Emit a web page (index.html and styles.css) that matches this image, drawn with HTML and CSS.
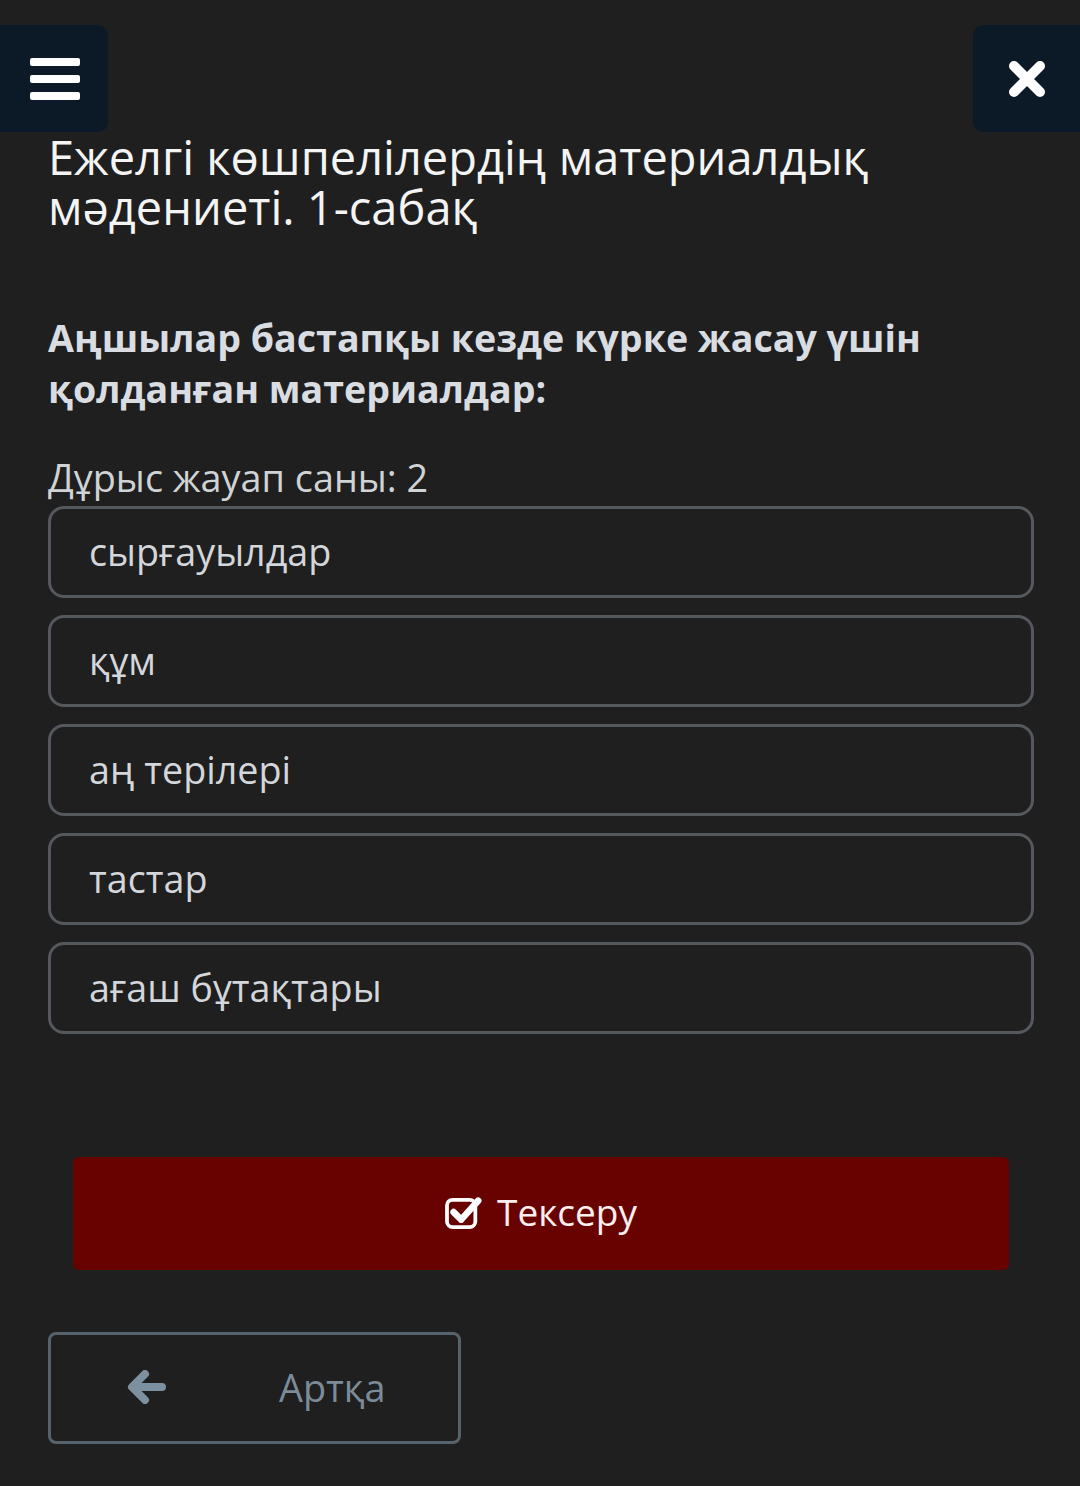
FILE: index.html
```html
<!DOCTYPE html>
<html lang="kk">
<head>
<meta charset="utf-8">
<title>Тест</title>
<link rel="stylesheet" href="styles.css">
</head>
<body>
<div class="page">
  <header class="topbar">
    <div class="tile tile-left">
      <svg class="icon-menu" viewBox="0 0 50 42" width="50" height="42">
        <rect x="0" y="0" width="50" height="8" rx="2" fill="#fff"/>
        <rect x="0" y="17" width="50" height="8" rx="2" fill="#fff"/>
        <rect x="0" y="34" width="50" height="8" rx="2" fill="#fff"/>
      </svg>
    </div>
    <div class="tile tile-right">
      <svg class="icon-close" viewBox="0 0 40 40" width="40" height="40">
        <path d="M7 7 L33 33 M33 7 L7 33" stroke="#fff" stroke-width="10" stroke-linecap="round"/>
      </svg>
    </div>
  </header>

  <h1 class="title">Ежелгі көшпелілердің материалдық мәдениеті. 1-сабақ</h1>

  <h2 class="question">Аңшылар бастапқы кезде күрке жасау үшін қолданған материалдар:</h2>

  <p class="count">Дұрыс жауап саны: 2</p>

  <ul class="options">
    <li class="option">сырғауылдар</li>
    <li class="option">құм</li>
    <li class="option">аң терілері</li>
    <li class="option">тастар</li>
    <li class="option">ағаш бұтақтары</li>
  </ul>

  <div class="check-wrap">
    <button class="check-btn">
      <svg class="icon-check" viewBox="0 0 40 36" width="38" height="34">
        <rect x="2" y="4" width="30" height="29" rx="6" fill="none" stroke="#fff" stroke-width="4"/>
        <path d="M9 17 L17 25 L35 5" fill="none" stroke="#fff" stroke-width="7" stroke-linecap="round" stroke-linejoin="round"/>
      </svg>
      <span>Тексеру</span>
    </button>
  </div>

  <div class="back-wrap">
    <button class="back-btn">
      <svg class="icon-back" viewBox="0 0 40 34" width="40" height="34">
        <path d="M18 4 L5 17 L18 30 M6 17 L35 17" fill="none" stroke="#7c90a0" stroke-width="8" stroke-linecap="round" stroke-linejoin="round"/>
      </svg>
      <span>Артқа</span>
    </button>
  </div>
</div>
</body>
</html>
```

FILE: styles.css
```css
* { box-sizing: border-box; }
html, body {
  margin: 0;
  padding: 0;
  background: #1f1f1f;
}
body {
  font-family: "Open Sans", "Noto Sans", sans-serif;
  color: #f2f2f2;
  width: 1080px;
  height: 1486px;
  overflow: hidden;
}
.page {
  padding-top: 25px;
}
.topbar {
  display: flex;
  justify-content: space-between;
  height: 107px;
}
.tile {
  width: 108px;
  height: 107px;
  background: #0b1a26;
  display: flex;
  align-items: center;
  justify-content: center;
}
.tile-left {
  border-radius: 0 10px 10px 0;
  padding-left: 1px;
}
.tile-right {
  width: 107px;
  border-radius: 10px 0 0 10px;
}
.title {
  margin: 0 0 0 48px;
  font-size: 47px;
  line-height: 50px;
  font-weight: 400;
  color: #f4f4f4;
  width: 960px;
}
.question {
  margin: 80px 0 0 48px;
  font-size: 37.6px;
  line-height: 51px;
  font-weight: 700;
  color: #d9dde2;
  width: 990px;
}
.count {
  margin: 40px 0 0 48px;
  font-size: 37.8px;
  line-height: 48px;
  color: #d0d3d6;
}
.options {
  list-style: none;
  margin: 4px 46px 0 48px;
  padding: 0;
  display: flex;
  flex-direction: column;
  gap: 17px;
}
.option {
  height: 92px;
  border: 3px solid #55595d;
  border-radius: 16px;
  padding-left: 38px;
  display: flex;
  align-items: center;
  font-size: 37.7px;
  color: #d3d6da;
  padding-bottom: 2px;
}
.check-wrap {
  padding: 123px 71px 0 73px;
}
.check-btn {
  width: 100%;
  height: 113px;
  background: #670201;
  border: none;
  border-radius: 6px;
  display: flex;
  align-items: center;
  justify-content: center;
  gap: 14px;
  font-family: inherit;
  font-size: 37px;
  color: #fbeeee;
  padding: 0 0 4px 0;
}
.icon-check { margin-top: 2px; }
.back-wrap {
  padding: 62px 0 0 48px;
}
.back-btn {
  width: 413px;
  height: 112px;
  background: transparent;
  border: 3px solid #56636d;
  border-radius: 8px;
  display: flex;
  align-items: center;
  padding: 0 0 2px 76px;
  font-family: inherit;
  font-size: 37.8px;
  color: #7b8c98;
}
.back-btn span {
  margin-left: 112px;
}
```
